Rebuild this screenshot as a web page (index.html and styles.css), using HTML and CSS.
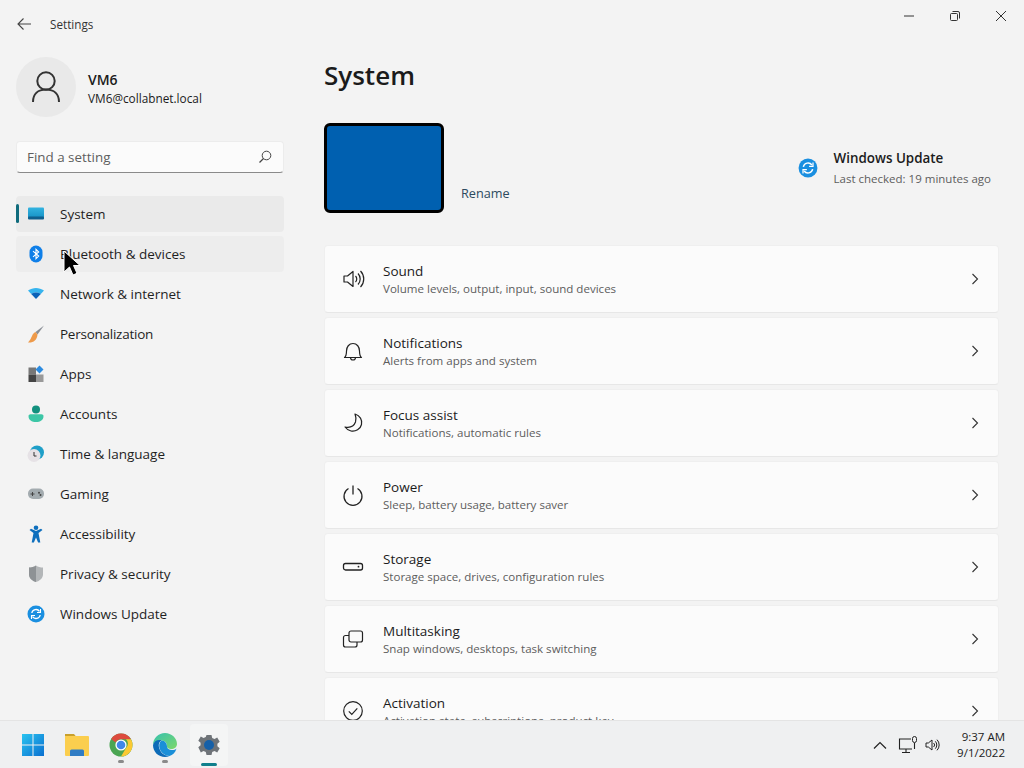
FILE: index.html
```html
<!DOCTYPE html>
<html lang="en">
<head>
<meta charset="utf-8">
<title>Settings</title>
<link rel="stylesheet" href="styles.css">
</head>
<body>
<div class="window">
  <aside class="sidebar">
    <div class="apptitle">
      <svg class="back" width="16" height="16" viewBox="0 0 16 16"><path d="M15 8H2M7.500 2.500 2 8l5.500 5.500" fill="none" stroke="#444" stroke-width="1.100"/></svg>
      <span>Settings</span>
    </div>
    <div class="profile">
      <div class="avatar">
        <svg width="30" height="32" viewBox="0 0 30 32"><circle cx="15" cy="10" r="8.700" fill="none" stroke="#333" stroke-width="2"/><path d="M2 31c0-8 5-12.500 13-12.500S28 23 28 31" fill="none" stroke="#333" stroke-width="2"/></svg>
      </div>
      <div class="who">
        <div class="who-name">VM6</div>
        <div class="who-mail">VM6@collabnet.local</div>
      </div>
    </div>
    <div class="search">
      <span>Find a setting</span>
      <svg width="14" height="14" viewBox="0 0 14 14"><circle cx="8.500" cy="5.500" r="4.300" fill="none" stroke="#444" stroke-width="1"/><path d="M5.500 8.500 1.500 12.500" stroke="#444" stroke-width="1.200"/></svg>
    </div>
    <nav class="nav">
      <div class="nav-item selected">
        <svg class="nav-icon" width="18" height="18" viewBox="0 0 18 18"><defs><linearGradient id="sys" x1="0" y1="0" x2="0" y2="1"><stop offset="0" stop-color="#33b3e0"/><stop offset="1" stop-color="#1490c4"/></linearGradient></defs><rect x="1" y="2.500" width="16" height="11" rx="1" fill="url(#sys)"/><rect x="1" y="11.500" width="16" height="3" rx="1" fill="#0f5f8e"/></svg>
        <span>System</span>
      </div>
      <div class="nav-item hovered">
        <svg class="nav-icon" width="18" height="18" viewBox="0 0 18 18"><rect x="2.500" y="0.500" width="13" height="17" rx="6.500" fill="#0f7fe8"/><path d="M6 6.200 11.700 11 9 13.700V4.300L11.700 7 6 11.800" fill="none" stroke="#fff" stroke-width="1.100"/></svg>
        <span>Bluetooth &amp; devices</span>
      </div>
      <div class="nav-item">
        <svg class="nav-icon" width="18" height="18" viewBox="0 0 18 18"><path d="M1 5.500C6 2 12 2 17 5.500L13.800 9C11 7 7 7 4.200 9Z" fill="#36b4ee"/><path d="M4.200 9C7 7 11 7 13.800 9L9 14Z" fill="#0a62b8"/></svg>
        <span>Network &amp; internet</span>
      </div>
      <div class="nav-item">
        <svg class="nav-icon" width="18" height="18" viewBox="0 0 18 18"><path d="M17 .5 8.500 7l2 2.500Z" fill="#8a8f96"/><path d="M8.500 7C4.500 8.500 5.500 13 1 17.500c5 .5 9-2 9.500-8Z" fill="#ee9a4a"/></svg>
        <span class="narrow">Personalization</span>
      </div>
      <div class="nav-item">
        <svg class="nav-icon" width="18" height="18" viewBox="0 0 18 18"><rect x="1.500" y="2.500" width="7.500" height="7" fill="#777"/><rect x="1.500" y="9.500" width="7.500" height="7.500" fill="#444"/><rect x="9" y="9.500" width="7.500" height="7.500" fill="#999"/><path d="M12.500 .5 16.500 4.500 12.500 8.500 8.500 4.500Z" fill="#2c8be0"/></svg>
        <span>Apps</span>
      </div>
      <div class="nav-item">
        <svg class="nav-icon" width="18" height="18" viewBox="0 0 18 18"><circle cx="9" cy="4.500" r="4" fill="#12907e"/><path d="M1.500 11c0-1 1-1.700 2-1.700h11c1 0 2 .7 2 1.700 0 4-3.300 6-7.500 6s-7.500-2-7.500-6Z" fill="#3cc6a6"/></svg>
        <span>Accounts</span>
      </div>
      <div class="nav-item">
        <svg class="nav-icon" width="18" height="18" viewBox="0 0 18 18"><circle cx="10" cy="7.500" r="7" fill="#1f9fc8"/><circle cx="7" cy="10.500" r="6.500" fill="#e6e2e6"/><path d="M7 7v4h2.500" fill="none" stroke="#333" stroke-width="1"/></svg>
        <span>Time &amp; language</span>
      </div>
      <div class="nav-item">
        <svg class="nav-icon" width="18" height="18" viewBox="0 0 18 18"><rect x="1" y="3.500" width="16" height="10.500" rx="5" fill="#a3abaf"/><path d="M3.500 9h4M5.500 7v4" stroke="#444" stroke-width="1"/><circle cx="12" cy="7.800" r="1" fill="#444"/><circle cx="13.500" cy="10" r="1" fill="#444"/></svg>
        <span>Gaming</span>
      </div>
      <div class="nav-item">
        <svg class="nav-icon" width="18" height="18" viewBox="0 0 18 18"><circle cx="9" cy="2.800" r="2.300" fill="#0e6fbd"/><path d="M2.500 5 4 3.800l5 2.200 5-2.200L15.500 5 11.500 8l1.800 9.500h-2.200L9 12.500l-2.100 5H4.700L6.500 8Z" fill="#0e6fbd"/></svg>
        <span>Accessibility</span>
      </div>
      <div class="nav-item">
        <svg class="nav-icon" width="18" height="18" viewBox="0 0 18 18"><path d="M9 .5c2 1.500 4.500 2 7 2v7c0 3.500-3.300 6.500-7 7.500-3.700-1-7-4-7-7.500v-7c2.500 0 5-.5 7-2Z" fill="#b3b6b8"/><path d="M9 .5V17c-3.700-1-7-4-7-7.500v-7c2.500 0 5-.5 7-2Z" fill="#8e9295"/></svg>
        <span>Privacy &amp; security</span>
      </div>
      <div class="nav-item">
        <svg class="nav-icon" width="18" height="18" viewBox="0 0 18 18"><circle cx="9" cy="9" r="8.500" fill="#1a8fe0"/><path d="M4.800 8A4.300 4.300 0 0 1 12.500 6.300M13.200 10A4.300 4.300 0 0 1 5.500 11.700" fill="none" stroke="#fff" stroke-width="1.300"/><path d="M13.500 4v3.500H10M4.500 14v-3.500H8" fill="none" stroke="#fff" stroke-width="1.100"/></svg>
        <span>Windows Update</span>
      </div>
    </nav>
  </aside>
  <main class="main">
    <div class="controls">
      <div class="ctl"><svg width="10" height="10" viewBox="0 0 10 10"><path d="M0 5h10" stroke="#333" stroke-width="1"/></svg></div>
      <div class="ctl"><svg width="10" height="10" viewBox="0 0 10 10"><rect x=".5" y="2.500" width="7" height="7" rx="1" fill="none" stroke="#333"/><path d="M2.500 .5h5.500a1.500 1.500 0 0 1 1.500 1.500v5.500" fill="none" stroke="#333"/></svg></div>
      <div class="ctl"><svg width="10" height="10" viewBox="0 0 10 10"><path d="M0 0 10 10M10 0 0 10" stroke="#333" stroke-width="1"/></svg></div>
    </div>
    <div class="content">
      <h1 class="page-title">System</h1>
      <div class="summary">
        <div class="device">
          <div class="monitor"></div>
          <a class="rename">Rename</a>
        </div>
        <div class="update">
          <svg width="20" height="20" viewBox="0 0 18 18"><circle cx="9" cy="9" r="8.500" fill="#1a8fe0"/><path d="M4.800 8A4.300 4.300 0 0 1 12.500 6.300M13.200 10A4.300 4.300 0 0 1 5.500 11.700" fill="none" stroke="#fff" stroke-width="1.300"/><path d="M13.500 4v3.500H10M4.500 14v-3.500H8" fill="none" stroke="#fff" stroke-width="1.100"/></svg>
          <div class="update-text">
            <div class="update-title">Windows Update</div>
            <div class="update-sub">Last checked: 19 minutes ago</div>
          </div>
        </div>
      </div>
      <div class="cards">
        <div class="card">
          <svg class="card-icon" width="24" height="24" viewBox="0 0 24 24"><path d="M3 9h3.500L12 4.500v15L6.500 15H3Z" fill="none" stroke="#222" stroke-width="1.200" stroke-linejoin="round"/><path d="M14.500 9a4.200 4.200 0 0 1 0 6M17 6.500a8 8 0 0 1 0 11M19.500 4a11.500 11.500 0 0 1 0 16" fill="none" stroke="#222" stroke-width="1.200"/></svg>
          <div class="card-text"><div class="card-title">Sound</div><div class="card-sub">Volume levels, output, input, sound devices</div></div>
          <svg class="chev" width="8" height="12" viewBox="0 0 8 12"><path d="M1.500 1 6.500 6l-5 5" fill="none" stroke="#333" stroke-width="1.100"/></svg>
        </div>
        <div class="card">
          <svg class="card-icon" width="24" height="24" viewBox="0 0 24 24"><path d="M3.500 18.500c2-1.500 2-3.500 2-6.500 0-4 2.500-7.500 6.500-7.500s6.500 3.500 6.500 7.500c0 3 0 5 2 6.500Z" fill="none" stroke="#222" stroke-width="1.200" stroke-linejoin="round"/><path d="M9.500 18.500a2.500 2.500 0 0 0 5 0" fill="none" stroke="#222" stroke-width="1.200"/></svg>
          <div class="card-text"><div class="card-title">Notifications</div><div class="card-sub">Alerts from apps and system</div></div>
          <svg class="chev" width="8" height="12" viewBox="0 0 8 12"><path d="M1.500 1 6.500 6l-5 5" fill="none" stroke="#333" stroke-width="1.100"/></svg>
        </div>
        <div class="card">
          <svg class="card-icon" width="24" height="24" viewBox="0 0 24 24"><path d="M14 3c5 1.500 7.500 6 6.500 10.500-1 4.500-6 7.500-10.500 6.500-2.500-.5-4.500-2-6-4 5 1 9-1 10.500-5 .8-2.500.5-5.500-.5-8Z" fill="none" stroke="#222" stroke-width="1.200" stroke-linejoin="round"/></svg>
          <div class="card-text"><div class="card-title">Focus assist</div><div class="card-sub">Notifications, automatic rules</div></div>
          <svg class="chev" width="8" height="12" viewBox="0 0 8 12"><path d="M1.500 1 6.500 6l-5 5" fill="none" stroke="#333" stroke-width="1.100"/></svg>
        </div>
        <div class="card">
          <svg class="card-icon" width="24" height="24" viewBox="0 0 24 24"><path d="M12 2.500v9" fill="none" stroke="#222" stroke-width="1.300"/><path d="M7.500 5.500a9 9 0 1 0 9 0" fill="none" stroke="#222" stroke-width="1.200"/></svg>
          <div class="card-text"><div class="card-title">Power</div><div class="card-sub">Sleep, battery usage, battery saver</div></div>
          <svg class="chev" width="8" height="12" viewBox="0 0 8 12"><path d="M1.500 1 6.500 6l-5 5" fill="none" stroke="#333" stroke-width="1.100"/></svg>
        </div>
        <div class="card">
          <svg class="card-icon" width="24" height="24" viewBox="0 0 24 24"><rect x="2.500" y="8.500" width="19" height="6.500" rx="2" fill="none" stroke="#222" stroke-width="1.300"/><circle cx="17.500" cy="11.700" r=".9" fill="#222"/></svg>
          <div class="card-text"><div class="card-title">Storage</div><div class="card-sub">Storage space, drives, configuration rules</div></div>
          <svg class="chev" width="8" height="12" viewBox="0 0 8 12"><path d="M1.500 1 6.500 6l-5 5" fill="none" stroke="#333" stroke-width="1.100"/></svg>
        </div>
        <div class="card">
          <svg class="card-icon" width="24" height="24" viewBox="0 0 24 24"><rect x="8" y="4" width="13.500" height="11" rx="2" fill="none" stroke="#222" stroke-width="1.200"/><path d="M8 8.500H4.500a2 2 0 0 0-2 2V18a2 2 0 0 0 2 2H14a2 2 0 0 0 2-2v-3" fill="none" stroke="#222" stroke-width="1.200"/></svg>
          <div class="card-text"><div class="card-title">Multitasking</div><div class="card-sub">Snap windows, desktops, task switching</div></div>
          <svg class="chev" width="8" height="12" viewBox="0 0 8 12"><path d="M1.500 1 6.500 6l-5 5" fill="none" stroke="#333" stroke-width="1.100"/></svg>
        </div>
        <div class="card">
          <svg class="card-icon" width="24" height="24" viewBox="0 0 24 24"><circle cx="12" cy="12" r="9.300" fill="none" stroke="#222" stroke-width="1.200"/><path d="M7.800 12.300l3 3 5.500-6" fill="none" stroke="#222" stroke-width="1.200"/></svg>
          <div class="card-text"><div class="card-title">Activation</div><div class="card-sub">Activation state, subscriptions, product key</div></div>
          <svg class="chev" width="8" height="12" viewBox="0 0 8 12"><path d="M1.500 1 6.500 6l-5 5" fill="none" stroke="#333" stroke-width="1.100"/></svg>
        </div>
      </div>
    </div>
  </main>
</div>
<footer class="taskbar">
  <div class="task-icons">
    <div class="task">
      <svg width="24" height="24" viewBox="0 0 24 24"><defs><linearGradient id="win" x1="0" y1="0" x2="1" y2="1"><stop offset="0" stop-color="#2ac4f0"/><stop offset="1" stop-color="#0a6fd0"/></linearGradient></defs><path d="M1 1h10.500v10.500H1ZM12.500 1H23v10.500H12.500ZM1 12.500h10.500V23H1ZM12.500 12.500H23V23H12.500Z" fill="url(#win)"/></svg>
    </div>
    <div class="task">
      <svg width="24" height="24" viewBox="0 0 24 24"><path d="M0 1h9l2 2.500H0Z" fill="#c9a02c"/><rect x="0" y="3" width="24" height="20" rx="1" fill="#fbce4e"/><path d="M5 23v-5a1.500 1.500 0 0 1 1.500-1.500h11A1.500 1.500 0 0 1 19 18v5Z" fill="#2f7cc4"/></svg>
    </div>
    <div class="task">
      <svg width="24" height="24" viewBox="0 0 24 24"><circle cx="12" cy="12" r="11.500" fill="#4aa553"/><path d="M12 .5a11.500 11.500 0 0 1 10 5.800H12a5.800 5.800 0 0 0-5.300 3.300L2.200 6A11.500 11.500 0 0 1 12 .5Z" fill="#dd4b3e"/><path d="M22 6.300A11.500 11.500 0 0 1 12 23.500l5-8.600a5.800 5.800 0 0 0 0-8.600Z" fill="#fbc933"/><circle cx="12" cy="12" r="5.600" fill="#fff"/><circle cx="12" cy="12" r="4.300" fill="#3f87ea"/></svg>
      <i class="dot"></i>
    </div>
    <div class="task">
      <svg width="26" height="26" viewBox="0 0 26 26"><defs><linearGradient id="edge" x1="0" y1="0" x2="1" y2="1"><stop offset="0" stop-color="#35c1b0"/><stop offset="1" stop-color="#7dd86a"/></linearGradient></defs><path d="M1 13C1 6 6.500 1 13 1c6.500 0 12 5 12 11 0 3-2.500 5-6 5-2.500 0-4-1-4-2.500 0-3-1.500-6-5.500-6C5.500 8.500 2 10 1 13Z" fill="url(#edge)"/><path d="M1 13c1-4 5-6 8.500-4.500C6.500 10 6 14 8 18c1.500 3.500 5 6 9.500 6-1.500.7-3 1-4.500 1C6.500 25 1 20 1 13Z" fill="#0c6bb8"/><path d="M15 14.500c0 2 2 3.500 5 3.500 2 0 3.500-.5 4.500-1.500-1 4-4 6.500-7 7.500-4.500 0-8-3-9.500-6.500C6.500 14 7 10.500 9.500 8.500c3.500 0 5.500 3 5.500 6Z" fill="#1a8fd8"/></svg>
      <i class="dot"></i>
    </div>
    <div class="task active">
      <svg width="24" height="24" viewBox="0 0 24 24"><path d="M9.500 1h5l.7 3 2.300 1 2.700-1.500 2.500 4.300-2.300 2v2.400l2.300 2-2.500 4.300-2.700-1.500-2.300 1-.7 3h-5l-.7-3-2.300-1-2.700 1.500L1.300 13.200l2.300-2V8.800l-2.300-2 2.500-4.300 2.700 1.500 2.300-1Z" fill="#6e7378" transform="translate(0 1)"/><circle cx="12" cy="12" r="5" fill="#1660a8"/></svg>
      <i class="dash"></i>
    </div>
  </div>
  <div class="tray">
    <svg class="tray-chev" width="14" height="8" viewBox="0 0 14 8"><path d="M1 7.500 7 1.500l6 6" fill="none" stroke="#222" stroke-width="1.200"/></svg>
    <svg class="tray-net" width="20" height="18" viewBox="0 0 20 18"><path d="M13 3H1.500v10H14" fill="none" stroke="#222" stroke-width="1.100"/><rect x="14.500" y=".5" width="4" height="6" rx="2" fill="none" stroke="#222"/><path d="M16.500 7v6M8 13v3.500M4 16.500h8" fill="none" stroke="#222" stroke-width="1.100"/></svg>
    <svg class="tray-vol" width="18" height="16" viewBox="0 0 24 24"><path d="M3 9h3.500L12 4.500v15L6.500 15H3Z" fill="none" stroke="#222" stroke-width="1.500" stroke-linejoin="round"/><path d="M14.500 9a4.200 4.200 0 0 1 0 6M17 6.500a8 8 0 0 1 0 11M19.500 4a11.500 11.500 0 0 1 0 16" fill="none" stroke="#222" stroke-width="1.500"/></svg>
    <div class="clock"><div>9:37 AM</div><div>9/1/2022</div></div>
  </div>
</footer>
<svg class="cursor" width="18" height="26" viewBox="0 0 18 26"><path d="M1 1v21l5.500-5 3.500 8 4-1.700-3.500-7.800H17Z" fill="#000" stroke="#fff" stroke-width="1"/></svg>
</body>
</html>
```
FILE: styles.css
```css
* { box-sizing: border-box; }
html, body { margin: 0; padding: 0; }
body {
  width: 1024px;
  height: 768px;
  overflow: hidden;
  background: #f3f3f3;
  color: #1b1b1b;
  font-family: "Open Sans", "Noto Sans", "Liberation Sans", sans-serif;
  font-size: 13.500px;
  position: relative;
}
.window { display: flex; height: 720px; overflow: hidden; }

.sidebar { width: 300px; flex: none; padding: 0 16px; }
.apptitle { height: 48px; display: flex; align-items: center; gap: 18px; font-size: 11.700px; color: #333; }
.back { flex: none; }
.profile { display: flex; align-items: center; gap: 12px; margin-top: 9px; height: 60px; }
.avatar { width: 60px; height: 60px; border-radius: 50%; background: #e9e9e9; display: flex; align-items: center; justify-content: center; }
.who { padding-top: 4px; }
.who-name { font-weight: 600; font-size: 14px; line-height: 18px; }
.who-mail { font-size: 11.800px; line-height: 18px; }
.search {
  width: 268px; height: 32px; margin-top: 24px; padding: 0 11px 0 10px;
  display: flex; align-items: center; justify-content: space-between;
  background: #fbfbfb; border: 1px solid #ececec; border-bottom-color: #8a8a8a; border-radius: 4px;
  color: #5e5e5e; font-size: 13.400px;
}
.nav { margin-top: 23px; display: flex; flex-direction: column; gap: 4px; }
.nav-item { height: 36px; display: flex; align-items: center; gap: 15px; padding: 0 0 1px 11px; width: 268px; border-radius: 4px; color: #1f1f1f; position: relative; }
.nav-icon { flex: none; }
.narrow { letter-spacing: -0.25px; }
.selected { background: #eaeaea; }
.selected::before { content: ""; position: absolute; left: 0; top: 8px; width: 3px; height: 19px; border-radius: 2px; background: #0f6b7c; }
.hovered { background: #ededed; }

.main { flex: 1; min-width: 0; }
.controls { display: flex; justify-content: flex-end; height: 32px; }
.ctl { width: 46px; height: 32px; display: flex; align-items: center; justify-content: center; }
.content { padding: 0 25px 0 24px; }
.page-title { margin: 0; font-size: 26px; line-height: 36px; font-weight: 600; color: #1b1b1b; padding-top: 25px; height: 61px; }
.summary { display: flex; justify-content: space-between; margin-top: 30px; height: 90px; }
.device { display: flex; align-items: flex-end; gap: 17px; }
.monitor { width: 120px; height: 90px; background: #0060b0; border: 3px solid #000; border-radius: 6px; }
.rename { color: #2c4a5e; font-size: 12.700px; line-height: 20px; padding-bottom: 10px; }
.update { display: flex; align-items: center; gap: 16px; padding-right: 8px; }
.update-text { padding-top: 1px; }
.update-title { font-weight: 600; font-size: 13.400px; line-height: 20px; }
.update-sub { font-size: 11.500px; line-height: 20px; color: #5d5d5d; margin-top: 1px; }
.cards { display: flex; flex-direction: column; gap: 4px; margin-top: 32px; }
.card { height: 68px; flex: none; display: flex; align-items: center; background: #fbfbfb; border: 1px solid #efefef; border-bottom-color: #e7e7e7; border-radius: 4px; padding-left: 16px; padding-right: 19px; }
.card-icon { flex: none; }
.card-text { flex: 1; margin-left: 18px; padding-top: 2px; }
.card-title { font-size: 13.500px; line-height: 18px; color: #1b1b1b; }
.card-sub { font-size: 11.550px; line-height: 18px; color: #5d5d5d; }
.chev { flex: none; }

.taskbar { height: 48px; display: flex; justify-content: space-between; align-items: stretch; background: #eff0f1; border-top: 1px solid #e4e4e4; padding-left: 11px; padding-right: 19px; }
.task-icons { display: flex; }
.task { width: 44px; display: flex; align-items: center; justify-content: center; position: relative; }
.task.active { background: #f4f5f5; border-radius: 4px; margin: 3px 0 2px; width: 38px; margin-left: 3px; }
.dot { position: absolute; bottom: 5px; left: 50%; margin-left: -3px; width: 6px; height: 3px; border-radius: 2px; background: #8a8a8a; }
.dash { position: absolute; bottom: 0; left: 11px; width: 16px; height: 3px; border-radius: 2px; background: #0f7f8c; }
.tray { display: flex; align-items: center; }
.tray-chev, .tray-net, .tray-vol { flex: none; }
.tray-net { margin-left: 11px; }
.tray-vol { margin-left: 5px; }
.clock { margin-left: 16px; text-align: right; font-size: 11.500px; line-height: 16px; color: #222; }
.cursor { position: absolute; left: 63px; top: 250px; }
```
